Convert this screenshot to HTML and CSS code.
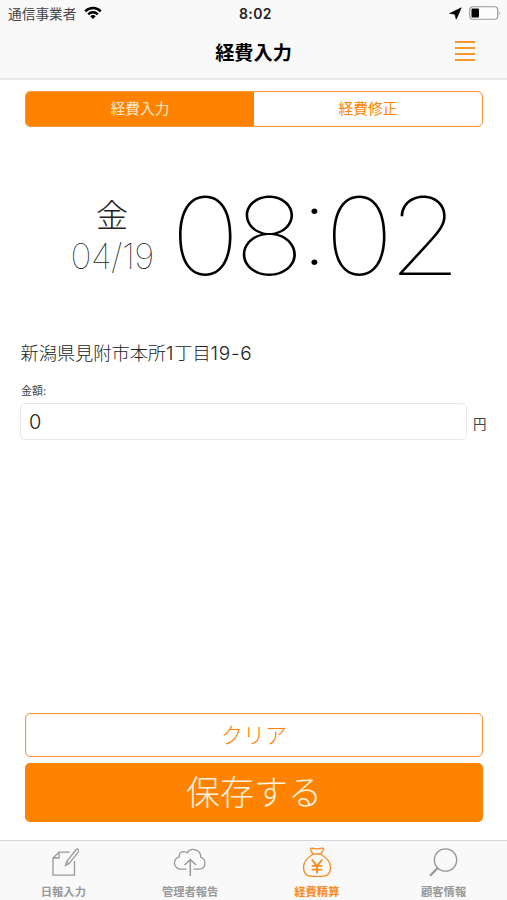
FILE: index.html
```
<!DOCTYPE html>
<html lang="ja">
<head>
<meta charset="utf-8">
<title>経費入力</title>
<link rel="stylesheet" href="styles.css">
</head>
<body>
<header class="header">
  <div class="status">
    <div class="carrier"><span>通信事業者</span>
      <svg width="18" height="14" viewBox="0 0 18 14" fill="none" stroke="#000" stroke-width="2.4"><path d="M1.200 5.300a11 11 0 0 1 15.600 0M4.200 8.300a6.800 6.800 0 0 1 9.600 0"/><path d="M9 13l-2.700-2.700a3.800 3.800 0 0 1 5.400 0z" fill="#000" stroke="none"/></svg>
    </div>
    <div class="clock">8:02</div>
    <div class="indicators">
      <svg width="13" height="13" viewBox="0 0 13 13"><path d="M12.300.8L7.200 12.300 5.900 7.200.6 6.400z" stroke="#000" stroke-width=".6"/></svg>
      <svg width="32" height="14" viewBox="0 0 32 14"><rect x=".75" y=".75" width="28" height="12.500" rx="3.200" fill="#fcfcfc" stroke="#999" stroke-width="1.200"/><rect x="2.500" y="2.500" width="7.500" height="9" rx="1"/><path d="M30 5q1.800 2 0 4z" fill="#999"/></svg>
    </div>
  </div>
  <div class="navbar">
    <h1>経費入力</h1>
    <button class="menu" aria-label="メニュー"><i></i><i></i><i></i><i></i></button>
  </div>
</header>
<main>
  <div class="segments"><button class="on">経費入力</button><button>経費修正</button></div>
  <section class="datetime">
    <div class="date"><span class="weekday">金</span><span class="day">04/19</span></div>
    <div class="time"><div>08<span class="colon">:</span>02</div></div>
  </section>
  <p class="address">新潟県見附市本所<b>1</b>丁目<b>19-6</b></p>
  <div class="label">金額:</div>
  <div class="amount"><div class="field">0</div><span>円</span></div>
  <div class="actions"><button class="clear">クリア</button><button class="save">保存する</button></div>
</main>
<nav class="tabs">
  <a class="tab">
    <svg width="32" height="32" viewBox="0 0 32 32"><path d="M22.500 5.200H12L6 11V28.200H27.500V14M12 5.200V11H6"/><path d="M18.500 18.500l1-3.700L29.200 2.500q1-1 2 0t.2 2.300L21.900 16.800zM19.500 14.800l2.400 2"/></svg>
    <span>日報入力</span></a>
  <a class="tab">
    <svg width="34" height="32" viewBox="0 0 34 32"><path d="M13.500 22.200H8a6.300 6.300 0 0 1-1.800-12.400Q6 4.500 11 4.600q1.800.1 3 1.200a7.500 7.500 0 0 1 13.700 4.600A6.100 6.100 0 0 1 27 22.200h-6.500"/><path d="M17.300 29V12.500M11.500 18l5.800-5.500 5.800 5.500" stroke-width="1.500"/></svg>
    <span>管理者報告</span></a>
  <a class="tab active">
    <svg width="32" height="32" viewBox="0 0 32 32"><path d="M12 7L9.700 3.200Q9 1.200 11 1.100q5 1.600 10.200 0 2 .2 1 2.200L19.700 7zM12 7.200Q2.500 12.800 2.500 20.500q0 8.800 9 8.900h9q9-.1 9-8.900 0-7.700-9.800-13.300"/><path d="M10.800 12.500l5.200 6.800 5.200-6.800M16 19v7.200M10.700 18.900h10.600M10.700 22.600h10.600" stroke-width="1.900"/></svg>
    <span>経費精算</span></a>
  <a class="tab">
    <svg width="32" height="32" viewBox="0 0 32 32"><circle cx="17.500" cy="13" r="11.200"/><path d="M9.500 21.200l-7.500 7.600" stroke-width="2.300"/></svg>
    <span>顧客情報</span></a>
</nav>
</body>
</html>
```
FILE: styles.css
```
* { box-sizing: border-box; }
body {
  margin: 0;
  height: 900px;
  display: flex;
  flex-direction: column;
  overflow: hidden;
  background: #fff;
  color: #222;
  font-family: Inter, "Noto Sans CJK JP", sans-serif;
}
button {
  margin: 0;
  padding: 0;
  border: 0;
  background: none;
  color: #ff8200;
  font-family: inherit;
}
.header {
  height: 80px;
  background: #f9f9f9;
  border-bottom: 2px solid #e8e8e8;
}
.status {
  height: 28px;
  display: grid;
  grid-template-columns: 1fr auto 1fr;
  align-items: center;
  padding: 0 6px 0 8px;
}
.carrier { display: flex; align-items: center; gap: 8px; font-size: 13.700px; line-height: 28px; color: #444; }
.carrier svg { margin-top: -2px; }
.clock { font-size: 14px; font-weight: 600; letter-spacing: .4px; color: #222; margin: -1px 0 0 2px; }
.indicators { display: flex; justify-content: flex-end; align-items: center; gap: 7px; margin-top: -2px; }
.navbar { height: 48px; display: grid; grid-template-columns: 1fr auto 1fr; align-items: center; }
.navbar h1 { grid-column: 2; margin: 2px 0 0; font-size: 19.200px; line-height: 28px; font-weight: 700; color: #000; }
.menu { justify-self: end; width: 20px; margin: -2px 32px 0 0; display: grid; gap: 3.700px; }
.menu i { height: 2px; background: #f89632; }
main { flex: 1; display: flex; flex-direction: column; }
.segments {
  height: 36px;
  margin: 11px 24px 0 25px;
  display: flex;
  border: 1.500px solid #fb9636;
  border-radius: 5px;
  overflow: hidden;
  box-shadow: inset 0 0 1px #fb9636;
}
.segments button { flex: 1; font-size: 14.700px; line-height: 33px; padding-top: 1px; }
.segments .on { background: #ff8200; color: #ffe8cc; }
.datetime { display: flex; height: 90px; margin: 63px 0 0 70px; }
.date { width: 84px; display: flex; flex-direction: column; align-items: center; }
.weekday { font-size: 32px; line-height: 48px; font-weight: 300; margin-top: 2px; }
.day { font-size: 35.500px; line-height: 34px; font-weight: 100; letter-spacing: -.7px; margin-top: 0; }
.time {
  width: 292px;
  margin-left: 13px;
  display: flex;
  justify-content: center;
  font-size: 108px;
  line-height: 92px;
  font-weight: 100;
  letter-spacing: -5.400px;
  color: #000;
  transform: scaleX(1.09);
}
.colon { display: inline-block; transform: translateY(-10px); }
.address { margin: 60px 0 0 20.500px; font-size: 18.200px; line-height: 26px; font-weight: 300; }
.address b { font-weight: 300; font-size: 19px; letter-spacing: .7px; }
.label { margin: 16px 0 0 21px; font-size: 11px; line-height: 16px; color: #444; }
.amount { display: flex; align-items: center; margin: 4px 20px 0; font-size: 13.500px; gap: 6px; }
.field { width: 447px; height: 37px; padding-left: 8px; border: 1px solid #e9e9e9; border-radius: 5px; font-size: 20px; line-height: 36px; font-weight: 300; }
.amount span { margin-top: 3px; color: #444; }
.actions { display: grid; gap: 6px; margin: auto 24px 18px 25px; }
.actions button { border-radius: 5px; font-weight: 300; }
.actions .clear { height: 44px; border: 1.500px solid #fb9636; box-shadow: inset 0 0 1px #fb9636; font-size: 22px; line-height: 40px; }
.actions .save { height: 59px; background: #ff8200; color: #fff3df; font-size: 34px; line-height: 58px; }
.tabs { height: 60px; display: grid; grid-template-columns: repeat(4, 1fr); border-top: 1px solid #d8d8d8; background: #f9f9f9; }
.tab { display: flex; flex-direction: column; align-items: center; color: #999; padding-top: 6px; }
.tab svg { fill: none; stroke: currentColor; stroke-width: 1.300; flex: none; }
.tab span { font-size: 11.300px; line-height: 16px; font-weight: 700; margin-top: 5px; }
.tabs .active { color: #fc8a1c; }
```
